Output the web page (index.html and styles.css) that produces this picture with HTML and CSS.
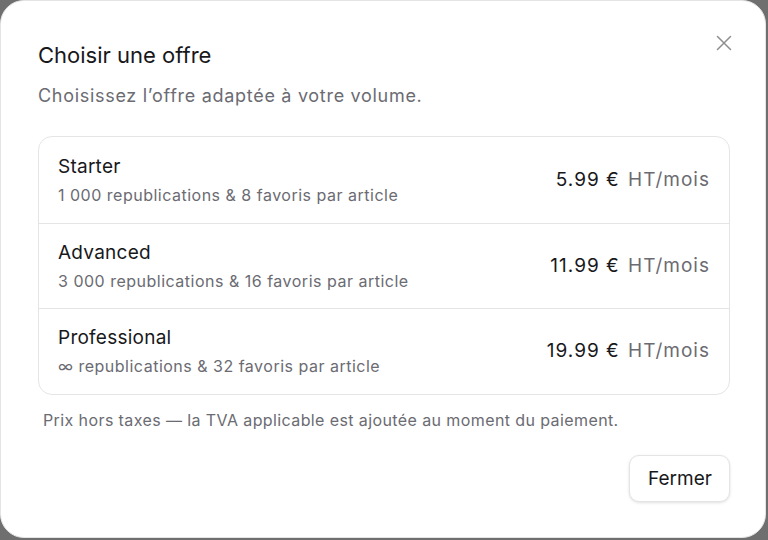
FILE: index.html
```html
<!DOCTYPE html>
<html lang="fr">
<head>
<meta charset="utf-8">
<link rel="stylesheet" href="styles.css">
</head>
<body>
<div class="dialog">
  <header class="head">
    <div>
      <h1 class="title">Choisir une offre</h1>
      <p class="subtitle">Choisissez l’offre adaptée à votre volume.</p>
    </div>
    <button class="close" aria-label="Fermer">
      <svg width="16" height="16" viewBox="0 0 16 16"><path d="M1.5 1.5L14.5 14.5M14.5 1.5L1.5 14.5" stroke="#8e8e8e" stroke-width="1.5" stroke-linecap="round"/></svg>
    </button>
  </header>
  <div class="plans">
    <div class="plan">
      <div class="info">
        <div class="name">Starter</div>
        <div class="desc">1 000 republications &amp; 8 favoris par article</div>
      </div>
      <div class="price">5.99&nbsp;€ <span class="unit">HT/mois</span></div>
    </div>
    <div class="plan">
      <div class="info">
        <div class="name">Advanced</div>
        <div class="desc">3 000 republications &amp; 16 favoris par article</div>
      </div>
      <div class="price">11.99&nbsp;€ <span class="unit">HT/mois</span></div>
    </div>
    <div class="plan">
      <div class="info">
        <div class="name">Professional</div>
        <div class="desc">∞ republications &amp; 32 favoris par article</div>
      </div>
      <div class="price">19.99&nbsp;€ <span class="unit">HT/mois</span></div>
    </div>
  </div>
  <p class="note">Prix hors taxes — la TVA applicable est ajoutée au moment du paiement.</p>
  <div class="actions">
    <button class="btn">Fermer</button>
  </div>
</div>
</body>
</html>
```
FILE: styles.css
```css
* { box-sizing: border-box; }
html, body { margin: 0; height: 100%; }
body {
  background: #6f6f6f;
  font-family: Inter, "Noto Sans", sans-serif;
  padding: 0 2px 2px 0;
}
.dialog {
  width: 766px;
  height: 538px;
  background: #fff;
  border: 1px solid #e4e4e4;
  border-radius: 24px;
  padding: 36px 35px 0 37px;
}
.head {
  display: flex;
  justify-content: space-between;
  align-items: flex-start;
}
.title {
  margin: 0;
  font-size: 22px;
  font-weight: 400;
  color: #18181b;
  line-height: 36px;
}
.subtitle {
  margin: 9px 0 0;
  font-size: 18px;
  letter-spacing: 0.7px;
  color: #6b6b72;
  line-height: 28px;
}
.close {
  border: 0;
  background: none;
  padding: 0;
  margin: -2px -2px 0 0;
  width: 16px;
  height: 16px;
  display: flex;
}
.plans {
  margin-top: 26px;
  border: 1px solid #e5e5e5;
  border-radius: 14px;
}
.plan {
  display: flex;
  align-items: center;
  justify-content: space-between;
  height: 85.6px;
  padding: 0 19px;
  border-top: 1px solid #e5e5e5;
}
.plan:first-child { border-top: 0; }
.name {
  font-size: 19px;
  letter-spacing: 0.25px;
  color: #18181b;
  line-height: 28px;
}
.desc {
  font-size: 16px;
  letter-spacing: 0.5px;
  color: #6b6b72;
  line-height: 24px;
  margin-top: 2px;
}
.price {
  font-size: 19px;
  letter-spacing: 1px;
  color: #18181b;
  white-space: nowrap;
  margin-top: -1px;
}
.unit {
  color: #6b6b72;
  margin-left: 2px;
}
.note {
  margin: 13px 0 0 5px;
  font-size: 16px;
  letter-spacing: 0.4px;
  color: #6b6b72;
  line-height: 24px;
}
.actions {
  display: flex;
  justify-content: flex-end;
  margin-top: 23px;
}
.btn {
  font-family: inherit;
  font-size: 19px;
  color: #18181b;
  background: #fff;
  border: 1px solid #e4e4e4;
  border-radius: 10px;
  padding: 0 18px;
  height: 47px;
  width: 101px;
  box-shadow: 0 1px 3px rgba(0,0,0,0.12);
}
```
